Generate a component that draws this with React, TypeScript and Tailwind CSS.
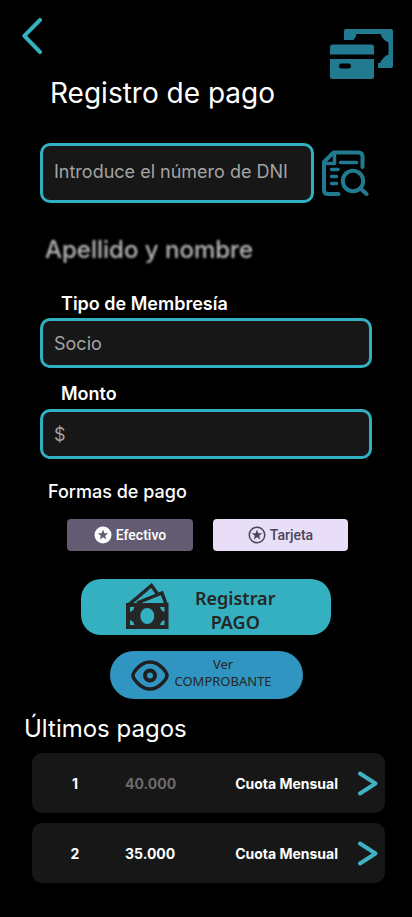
import React from 'react';

function BackIcon() {
  return (
    <svg width="20" height="36" viewBox="0 0 20 36" fill="none" aria-hidden="true">
      <path d="M18 2 2.3 17.8 18 34" stroke="#34b0c0" strokeWidth="4" strokeLinecap="round" strokeLinejoin="round" />
    </svg>
  );
}

function CardCashIcon() {
  return (
    <svg width="63" height="51" viewBox="0 0 63 51" aria-hidden="true">
      <g fill="#217a90">
        <path d="M14 12V3Q14 1 16 1H61Q63 1 63 3V38Q63 40 61 40H48V35H50Q53 28.500 58.500 26.500V14.500Q52.500 12 50.500 6H26.500Q26 9 23.500 12Z" />
        <path d="M0 26.500V19Q0 16.500 2.500 16.500H41.500Q44 16.500 44 19V26.500Z" />
        <path fillRule="evenodd" d="M0 31H44V48.500Q44 51 41.500 51H2.500Q0 51 0 48.500ZM11.500 35.500A2.500 2.500 0 0 0 11.500 40.500H18.500A2.500 2.500 0 0 0 18.500 35.500Z" />
      </g>
    </svg>
  );
}

function SearchDocumentIcon() {
  return (
    <svg width="47" height="46" viewBox="0 0 47 46" fill="none" stroke="#217a90" strokeWidth="4" strokeLinecap="round" strokeLinejoin="round" aria-hidden="true">
      <path d="M16.500 44H6Q2 44 2 40V12L11.500 2.500H36.500Q40.500 2.500 40.500 6.500V17" />
      <path d="M2.500 13.500H12.500V3" strokeWidth="3.500" />
      <path d="M18.500 12.500H34.500M9.500 19.500H16M9.500 26.500H14.500M9.500 33.500H14.500" strokeWidth="3.500" />
      <circle cx="31" cy="31" r="10.200" />
      <path d="M38.500 38.500 44.500 44" />
    </svg>
  );
}

function StarIcon({ filled }: { filled: boolean }) {
  return (
    <svg width="18" height="18" viewBox="0 0 18 18" aria-hidden="true">
      {filled ? (
        <circle cx="9" cy="9" r="8.500" fill="#fff" />
      ) : (
        <circle cx="9" cy="9" r="7.750" fill="none" stroke="#4a4458" strokeWidth="1.500" />
      )}
      <path
        d="m9 3.500 1.350 3.650 3.900.15-3.050 2.400 1.050 3.750L9 11.300l-3.250 2.150L6.800 9.700 3.750 7.300l3.900-.15Z"
        fill={filled ? '#625b71' : '#4a4458'}
      />
    </svg>
  );
}

function CashIcon() {
  return (
    <svg width="43" height="47" viewBox="0 0 43 47" aria-hidden="true">
      <g fill="none" stroke="#262626" strokeWidth="3.500">
        <path d="M3 21.500 25.500 2.500 31.500 11" />
        <path d="M11 20 36 10 40 21" />
      </g>
      <path
        fill="#262626"
        fillRule="evenodd"
        d="M0 20H42.500V46H0ZM21.300 25A7 8 0 0 0 21.300 41A7 8 0 0 0 21.300 25ZM4 24V29Q7.500 28 8.500 24ZM38.500 24H34Q35 28 38.500 29ZM4 42H8.500Q7.500 38 4 37ZM38.500 42V37Q35 38 34 42Z"
      />
    </svg>
  );
}

function EyeIcon() {
  return (
    <svg width="38" height="31" viewBox="0 0 38 31" fill="none" stroke="#1f1f1f" strokeWidth="3.500" aria-hidden="true">
      <path d="M2 15.500C2 13 9 2 19 2S36 13 36 15.500 29 29 19 29 2 18 2 15.500Z" strokeLinejoin="round" />
      <circle cx="19" cy="15.500" r="5" strokeWidth="4" />
    </svg>
  );
}

function DetailIcon() {
  return (
    <svg width="20" height="25" viewBox="0 0 20 25" fill="none" aria-hidden="true">
      <path d="M2 2.500 17.500 12.500 2 22.500" stroke="#40b2c3" strokeWidth="4" strokeLinecap="round" strokeLinejoin="round" />
    </svg>
  );
}

const field =
  'block w-full rounded-[10px] border-3 border-[#30b0c0] bg-[#171717] px-[11px] text-lg text-white placeholder:text-[#a3a3a3] placeholder:opacity-100';

const payments = [
  { id: 1, amount: '40.000', concept: 'Cuota Mensual', muted: true },
  { id: 2, amount: '35.000', concept: 'Cuota Mensual', muted: false },
];

export default function App() {
  return (
    <main className="min-h-screen bg-black pb-8 font-['Inter',sans-serif] text-white">
      <header className="flex items-start justify-between pt-[18px] pr-[19px] pl-[22px]">
        <div>
          <button type="button" aria-label="Volver" className="block">
            <BackIcon />
          </button>
          <h1 className="mt-[22px] ml-7 text-[28px] leading-[34px]">Registro de pago</h1>
        </div>
        <div className="pt-[10px]">
          <CardCashIcon />
        </div>
      </header>

      <form className="mt-[33px] px-10" onSubmit={(e) => e.preventDefault()}>
        <div className="flex items-center gap-2">
          <input aria-label="DNI" inputMode="numeric" placeholder="Introduce el número de DNI" className={`${field} h-[60px] min-w-0 flex-1 pb-1`} />
          <button type="button" aria-label="Buscar" className="w-[50px]">
            <SearchDocumentIcon />
          </button>
        </div>
        <p className="mt-8 ml-[5px] text-2xl leading-[30px] font-medium text-[#b8b8b8] blur-[1px]">Apellido y nombre</p>

        <label htmlFor="membership" className="mt-[27px] mb-[2px] ml-[21px] block text-lg leading-6 font-semibold">
          Tipo de Membresía
        </label>
        <input id="membership" placeholder="Socio" className={`${field} h-[50px]`} />

        <label htmlFor="amount" className="mt-[14px] mb-[3px] ml-[21px] block text-lg leading-6 font-semibold">
          Monto
        </label>
        <input id="amount" inputMode="decimal" placeholder="$" className={`${field} h-[50px]`} />

        <fieldset className="mt-[21px]">
          <legend className="ml-2 text-lg leading-6 font-medium">Formas de pago</legend>
          <div className="mt-[15px] flex gap-5 pr-6 pl-[27px] font-['Roboto',sans-serif] text-sm font-medium">
            <button type="button" className="flex h-8 w-[126px] items-center justify-center gap-1 rounded bg-[#625b71] text-white">
              <StarIcon filled />
              Efectivo
            </button>
            <button type="button" className="flex h-8 flex-1 items-center justify-center gap-1 rounded bg-[#e8def8] text-[#4a4458]">
              <StarIcon filled={false} />
              Tarjeta
            </button>
          </div>
        </fieldset>

        <div className="mt-7 flex flex-col items-center gap-4 font-['Noto_Sans',sans-serif] text-[#262626]">
          <button type="submit" className="flex h-14 w-[250px] items-center gap-[26px] rounded-[20px] bg-[#34b0c0] pb-[2px] pl-[45px] text-lg leading-6 font-semibold">
            <CashIcon />
            <span className="pt-[8px]">
              Registrar
              <br />
              PAGO
            </span>
          </button>
          <button type="button" className="flex h-12 w-[193px] items-center gap-[6px] rounded-full bg-[#3095c0] pl-[21px] text-[13px] leading-[17px]">
            <EyeIcon />
            <span className="pb-1">
              Ver
              <br />
              COMPROBANTE
            </span>
          </button>
        </div>
      </form>

      <section className="mt-[15px]">
        <h2 className="ml-6 text-2xl leading-[30px]">Últimos pagos</h2>
        <ul className="mt-[9px] mr-[27px] ml-8 flex flex-col gap-[10px] text-sm font-bold">
          {payments.map((p) => (
            <li key={p.id} className="flex h-[60px] items-center rounded-[10px] bg-[#171717] pt-[2px] pr-[7px] pl-[33px]">
              <span className="w-5 text-center">{p.id}</span>
              <span className={`ml-10 flex-1 ${p.muted ? 'text-[#6b6b6b]' : 'text-white'}`}>{p.amount}</span>
              <span>{p.concept}</span>
              <button type="button" aria-label={`Ver pago ${p.id}`} className="ml-5 pb-[2px]">
                <DetailIcon />
              </button>
            </li>
          ))}
        </ul>
      </section>
    </main>
  );
}
